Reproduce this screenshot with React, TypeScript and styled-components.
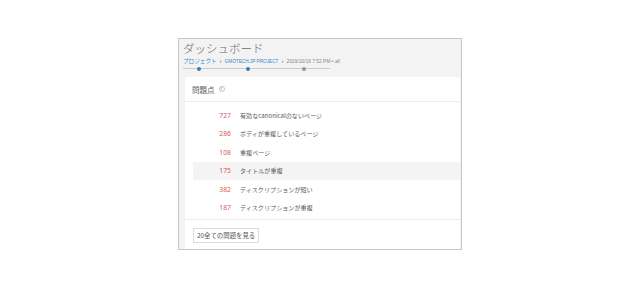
import styled, { createGlobalStyle } from 'styled-components';

type Issue = {
  count: number;
  label: string;
  active?: boolean;
};

const issues: Issue[] = [
  { count: 727, label: '有効なcanonicalのないページ' },
  { count: 286, label: 'ボディが重複しているページ' },
  { count: 108, label: '重複ページ' },
  { count: 175, label: 'タイトルが重複', active: true },
  { count: 382, label: 'ディスクリプションが短い' },
  { count: 187, label: 'ディスクリプションが重複' },
];

const GlobalStyle = createGlobalStyle`
  body {
    margin: 0;
    background: #ffffff;
    font-family: "Noto Sans", "Noto Sans CJK JP", sans-serif;
  }
`;

const App = () => {
  return (
    <>
      <GlobalStyle />
      <Page>
        <Frame>
          <Header>
            <Title>ダッシュボード</Title>
            <Crumbs>
              <CrumbLink>プロジェクト</CrumbLink>
              <Sep>›</Sep>
              <CrumbLink latin>GMOTECH.JP PROJECT</CrumbLink>
              <Sep>›</Sep>
              <span>2019/10/16 7:52 PM • all</span>
            </Crumbs>
            <Timeline>
              <Dot pos={14} active />
              <Dot pos={63} active />
              <Dot pos={119} />
            </Timeline>
          </Header>
          <Card>
            <CardHead>
              問題点
              <InfoIcon>i</InfoIcon>
            </CardHead>
            <List>
              {issues.map((issue) => (
                <Row key={issue.count} active={issue.active}>
                  <Count>{issue.count}</Count>
                  <Label>{issue.label}</Label>
                </Row>
              ))}
            </List>
            <Footer>
              <MoreButton>20全ての問題を見る</MoreButton>
            </Footer>
          </Card>
        </Frame>
      </Page>
    </>
  );
};

const Page = styled.div`
  display: flex;
  justify-content: center;
  padding-top: 38px;
`;

const Frame = styled.div`
  box-sizing: border-box;
  width: 284px;
  height: 212px;
  border: 1px solid #c6c6c6;
  background: #f3f3f3;
  padding: 0 1px 0 6px;
  display: flex;
  flex-direction: column;
`;

const Header = styled.div`
  margin-left: -2px;
  height: 38px;
`;

const Title = styled.div`
  font-size: 11.5px;
  line-height: 18px;
  color: #6a6a6a;
  font-family: "Noto Sans CJK JP", sans-serif;
  font-weight: 300;
`;

const Crumbs = styled.div`
  display: flex;
  align-items: center;
  gap: 2px;
  height: 9px;
  font-size: 4.9px;
  line-height: 9px;
  color: #888;
  white-space: nowrap;
  font-family: "Liberation Sans", "Noto Sans CJK JP", sans-serif;
`;

const CrumbLink = styled.span<{ latin?: boolean }>`
  color: #3a87c8;
  font-size: ${(p) => (p.latin ? '4.7px' : '5.6px')};
  font-family: ${(p) => (p.latin ? '"Liberation Sans", sans-serif' : '"Noto Sans CJK JP", sans-serif')};
`;

const Sep = styled.span`
  color: #666;
  font-size: 6px;
  margin: 0 1px;
`;

const Timeline = styled.div`
  position: relative;
  margin-top: 2px;
  width: 147px;
  height: 1px;
  background: #cbcbcb;
`;

const Dot = styled.span<{ pos: number; active?: boolean }>`
  position: absolute;
  left: ${(p) => p.pos}px;
  top: -1.5px;
  width: 4px;
  height: 4px;
  border-radius: 50%;
  background: ${(p) => (p.active ? '#2b7fc0' : '#999')};
`;

const Card = styled.div`
  flex: 1;
  background: #ffffff;
  display: flex;
  flex-direction: column;
`;

const CardHead = styled.div`
  display: flex;
  align-items: center;
  gap: 4px;
  height: 24px;
  padding: 0 0 0 7px;
  border-bottom: 1px solid #ececec;
  font-size: 7.5px;
  color: #606060;
  font-family: "Noto Sans CJK JP", sans-serif;
`;

const InfoIcon = styled.span`
  box-sizing: border-box;
  display: inline-flex;
  align-items: center;
  justify-content: center;
  width: 6px;
  height: 6px;
  border: 1px solid #c4c4c4;
  border-radius: 50%;
  font-size: 4.5px;
  line-height: 1;
  color: #aaa;
  font-family: "Liberation Sans", sans-serif;
  font-weight: bold;
`;

const List = styled.div`
  padding: 4px 0 2px 8px;
  border-bottom: 1px solid #ececec;
`;

const Row = styled.div<{ active?: boolean }>`
  display: flex;
  align-items: center;
  height: 18.5px;
  background: ${(p) => (p.active ? '#f4f4f4' : 'transparent')};
`;

const Count = styled.span`
  width: 38px;
  text-align: right;
  font-size: 6.8px;
  color: #d65a55;
`;

const Label = styled.span`
  margin-left: 9px;
  font-size: 6.1px;
  color: #5a5a5a;
  font-family: "Noto Sans CJK JP", sans-serif;
`;

const Footer = styled.div`
  display: flex;
  padding: 8px 0 0 8px;
`;

const MoreButton = styled.button`
  box-sizing: border-box;
  height: 15px;
  padding: 0 3px;
  border: 1px solid #dcdcdc;
  background: #fff;
  font-size: 6.4px;
  color: #555;
  font-family: "Noto Sans CJK JP", sans-serif;
`;

export default App;
